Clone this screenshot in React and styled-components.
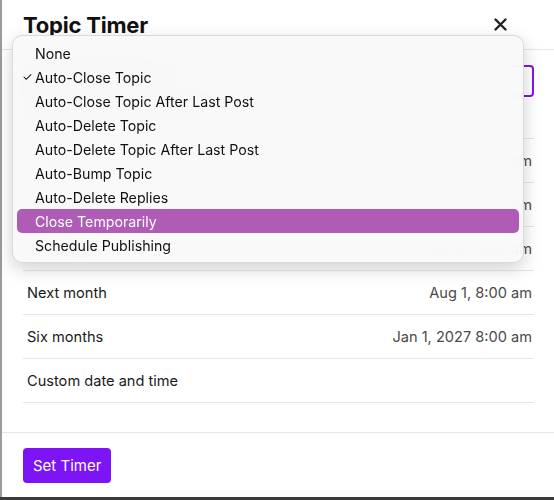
import React from "react";
import styled, { createGlobalStyle } from "styled-components";

const Global = createGlobalStyle`
  html, body { margin: 0; padding: 0; }
  body {
    background: #3b3b3b;
    font-family: Inter, "Liberation Sans", sans-serif;
    color: #1a1a1a;
    width: 554px;
    height: 500px;
    overflow: hidden;
  }
`;

const Page = styled.div`
  position: relative;
  width: 554px;
  height: 500px;
  background: #3b3b3b;
`;

const Modal = styled.div`
  display: flex;
  flex-direction: column;
  height: 497px;
  background: #fff;
  border-left: 2px solid #9b9b9b;
  box-sizing: border-box;
`;

const Header = styled.div`
  display: flex;
  align-items: center;
  justify-content: space-between;
  height: 49px;
  padding: 0 47px 0 21px;
  border-bottom: 1px solid #e6e6e6;
  box-sizing: content-box;
`;

const Title = styled.h1`
  margin: 0;
  font-size: 22px;
  font-weight: 700;
  letter-spacing: -0.2px;
  color: #111;
`;

const CloseBtn = styled.button`
  border: 0;
  background: none;
  padding: 0;
  width: 14px;
  height: 14px;
  display: flex;
  align-items: center;
  justify-content: center;
  color: #222;
`;

const Body = styled.div`
  flex: 1;
  display: flex;
  flex-direction: column;
  padding: 15px 20px 0 21px;
`;

const SelectBox = styled.div`
  height: 32px;
  border: 2px solid #8512f2;
  border-radius: 4px;
  box-sizing: border-box;
  display: flex;
  align-items: center;
  padding: 0 10px;
  font-size: 15px;
`;

const Label = styled.div`
  height: 41px;
  display: flex;
  align-items: center;
  font-size: 14px;
  color: #555;
`;

const List = styled.div`
  display: flex;
  flex-direction: column;
  border-top: 1px solid #e6e6e6;
`;

const Row = styled.div`
  display: flex;
  align-items: center;
  justify-content: space-between;
  height: 43px;
  padding: 0 2px 0 4px;
  border-bottom: 1px solid #e6e6e6;
  font-size: 14.6px;
`;

const RowLabel = styled.span`
  color: #1a1a1a;
`;

const RowValue = styled.span`
  color: #4a4a4a;
`;

const Footer = styled.div`
  display: flex;
  align-items: center;
  height: 64px;
  padding: 0 21px;
  border-top: 1px solid #e6e6e6;
`;

const PrimaryButton = styled.button`
  height: 35px;
  padding: 0 10px;
  border: 0;
  border-radius: 4px;
  background: #7d14f5;
  color: #fff;
  font-family: Inter, "Liberation Sans", sans-serif;
  font-size: 15px;
`;

const Menu = styled.div`
  position: absolute;
  left: 12px;
  top: 35px;
  width: 512px;
  box-sizing: border-box;
  padding: 5px 4px;
  display: flex;
  flex-direction: column;
  background: rgba(249, 249, 249, 0.95);
  backdrop-filter: blur(14px);
  border: 1px solid rgba(0, 0, 0, 0.13);
  border-radius: 10px;
  box-shadow: 0 6px 18px rgba(0, 0, 0, 0.18);
`;

const MenuItem = styled.div`
  position: relative;
  height: 24px;
  display: flex;
  align-items: center;
  padding-left: 18px;
  border-radius: 5px;
  font-size: 14.2px;
  color: ${(p) => (p.$active ? "#fff" : "#111")};
  background: ${(p) => (p.$active ? "#af5cb7" : "transparent")};
`;

const Check = styled.span`
  position: absolute;
  left: 5px;
  font-size: 12px;
  top: 4px;
`;

const rows = [
  ["Tomorrow", "Jul 2, 8:00 am"],
  ["Next week", "Jul 6, 8:00 am"],
  ["Two weeks", "Jul 13, 8:00 am"],
  ["Next month", "Aug 1, 8:00 am"],
  ["Six months", "Jan 1, 2027 8:00 am"],
  ["Custom date and time", ""],
];

const options = [
  "None",
  "Auto-Close Topic",
  "Auto-Close Topic After Last Post",
  "Auto-Delete Topic",
  "Auto-Delete Topic After Last Post",
  "Auto-Bump Topic",
  "Auto-Delete Replies",
  "Close Temporarily",
  "Schedule Publishing",
];

export default function App() {
  return (
    <Page>
      <Global />
      <Modal>
        <Header>
          <Title>Topic Timer</Title>
          <CloseBtn aria-label="close">
            <svg width="13" height="13" viewBox="0 0 13 13">
              <path d="M1.5 1.5 L11.5 11.5 M11.5 1.5 L1.5 11.5" stroke="#222" strokeWidth="2.4" strokeLinecap="round" />
            </svg>
          </CloseBtn>
        </Header>
        <Body>
          <SelectBox>Auto-Close Topic</SelectBox>
          <Label>When should the topic close?</Label>
          <List>
            {rows.map(([l, v]) => (
              <Row key={l}>
                <RowLabel>{l}</RowLabel>
                <RowValue>{v}</RowValue>
              </Row>
            ))}
          </List>
        </Body>
        <Footer>
          <PrimaryButton>Set Timer</PrimaryButton>
        </Footer>
      </Modal>
      <Menu>
        {options.map((o) => (
          <MenuItem key={o} $active={o === "Close Temporarily"}>
            {o === "Auto-Close Topic" && <Check>✓</Check>}
            {o}
          </MenuItem>
        ))}
      </Menu>
    </Page>
  );
}
